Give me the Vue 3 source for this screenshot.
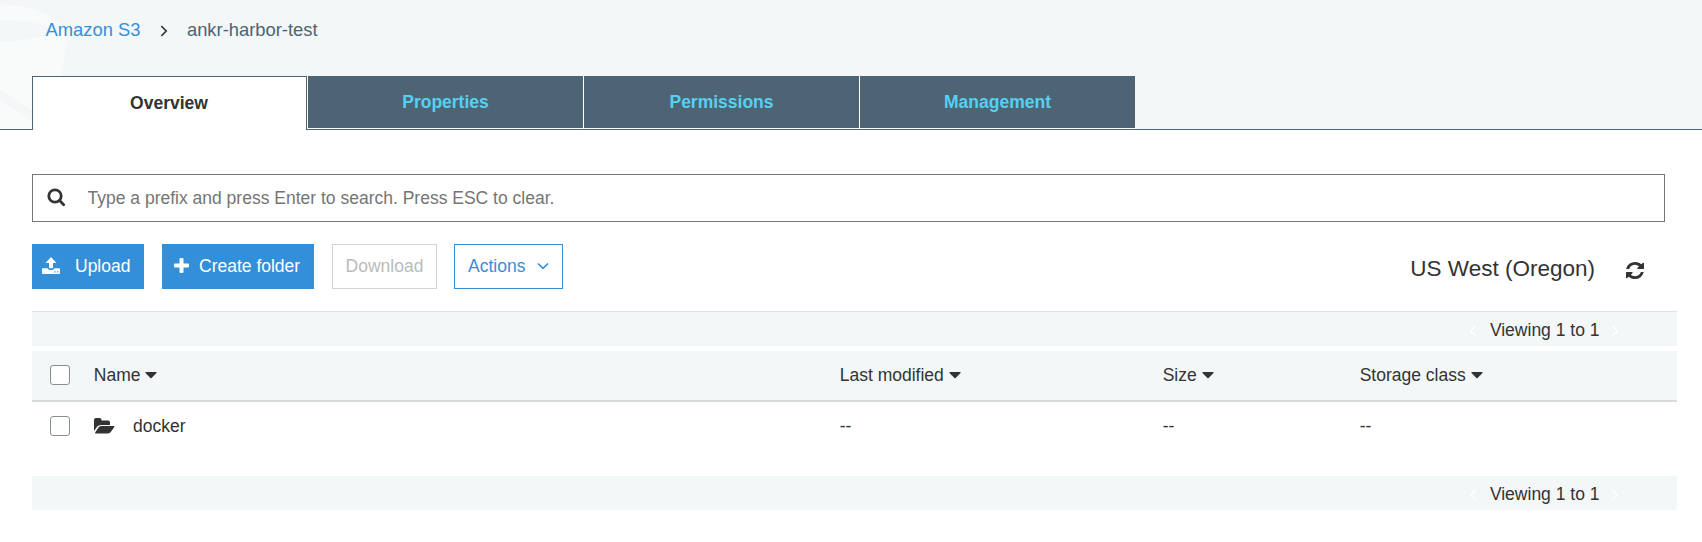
<script setup>
const tabs = ['Overview', 'Properties', 'Permissions', 'Management']
const columns = [
  { key: 'name', label: 'Name' },
  { key: 'modified', label: 'Last modified' },
  { key: 'size', label: 'Size' },
  { key: 'storage', label: 'Storage class' },
]
const rows = [{ name: 'docker', modified: '--', size: '--', storage: '--' }]
</script>

<template>
  <div class="page">
    <header class="header">
      <svg class="bucket" width="70" height="129" viewBox="0 0 70 129">
        <path class="bucket-body" d="M0 4.5C34 5 60 17 66 33Q67 37 66.500 42L54 129H0Z" />
        <path class="bucket-cut" d="M0 19.500C26 20 45 24 57 30.500C44 37 25 41 0 41.500Z" />
        <path class="bucket-cut" d="M0 90L40 115V126L0 99Z" />
      </svg>
      <nav class="crumbs">
        <a class="crumb-link">Amazon S3</a>
        <svg class="crumb-arrow" width="8" height="12" viewBox="0 0 8 12"><path d="M1.300 1L6.200 6L1.300 11" /></svg>
        <span>ankr-harbor-test</span>
      </nav>
      <div class="tabs">
        <div v-for="(tab, i) in tabs" :key="tab" class="tab" :class="{ active: i === 0 }">{{ tab }}</div>
      </div>
    </header>

    <main class="content">
      <div class="search">
        <svg width="19" height="19" viewBox="0 0 19 19"><circle cx="8" cy="8" r="6.200" /><path d="M12.600 12.600L16.700 16.700" /></svg>
        <input type="text" placeholder="Type a prefix and press Enter to search. Press ESC to clear." />
      </div>

      <div class="toolbar">
        <button class="btn primary upload">
          <svg width="18" height="17" viewBox="0 0 18 17">
            <path d="M9 0L14.500 6H11V10.500Q11 11.300 10.200 11.300H7.800Q7 11.300 7 10.500V6H3.500Z" />
            <path fill-rule="evenodd" d="M1 11.300H5.600Q6.300 13 8 13H10Q11.700 13 12.400 11.300H17Q18 11.300 18 12.300V16Q18 17 17 17H1Q0 17 0 16V12.300Q0 11.300 1 11.300ZM12.200 14.300V15.500H13.500V14.300ZM15 14.300V15.500H16.300V14.300Z" />
          </svg>
          <span>Upload</span>
        </button>
        <button class="btn primary create">
          <svg width="15" height="15" viewBox="0 0 15 15"><path d="M5.500 1Q5.500 0 6.500 0H8.500Q9.500 0 9.500 1V5.500H14Q15 5.500 15 6.500V8.500Q15 9.500 14 9.500H9.500V14Q9.500 15 8.500 15H6.500Q5.500 15 5.500 14V9.500H1Q0 9.500 0 8.500V6.500Q0 5.500 1 5.500H5.500Z" /></svg>
          <span>Create folder</span>
        </button>
        <button class="btn disabled" disabled>Download</button>
        <button class="btn outline">
          <span>Actions</span>
          <svg width="12" height="8" viewBox="0 0 12 8"><path d="M1 1.500L6 6.300L11 1.500" /></svg>
        </button>
        <div class="region">
          <span>US West (Oregon)</span>
          <svg width="18" height="17" viewBox="0 128 1536 1536" preserveAspectRatio="none"><path d="M1511 1056q0 5-1 7-64 268-268 434.500t-478 166.500q-146 0-282.500-55t-243.500-157l-129 129q-19 19-45 19t-45-19-19-45v-448q0-26 19-45t45-19h448q26 0 45 19t19 45-19 45l-137 137q71 66 161 102t187 36q134 0 250-65t186-179q11-17 53-117 8-23 30-23h192q13 0 22.500 9.500t9.500 22.500zm25-800v448q0 26-19 45t-45 19h-448q-26 0-45-19t-19-45 19-45l138-138q-148-137-349-137-134 0-250 65t-186 179q-11 17-53 117-8 23-30 23h-199q-13 0-22.500-9.500t-9.500-22.500v-7q65-268 270-434.500t480-166.500q146 0 284 55.500t245 156.500l130-129q19-19 45-19t45 19 19 45z" /></svg>
        </div>
      </div>

      <div class="pager top">
        <svg width="8" height="12" viewBox="0 0 8 12"><path d="M6.700 1L1.800 6L6.700 11" /></svg>
        <span>Viewing 1 to 1</span>
        <svg width="8" height="12" viewBox="0 0 8 12"><path d="M1.300 1L6.200 6L1.300 11" /></svg>
      </div>

      <div class="grid head">
        <span class="check"></span>
        <div v-for="col in columns" :key="col.key" class="cell">
          <span>{{ col.label }}</span>
          <svg class="caret" width="12" height="7" viewBox="0 0 12 7"><path d="M.8 0H11.200Q12 .3 11.500 1L6.600 6Q6 6.500 5.400 6L.5 1Q0 .3 .8 0Z" /></svg>
        </div>
      </div>
      <div v-for="row in rows" :key="row.name" class="grid row">
        <span class="check"></span>
        <div v-for="col in columns" :key="col.key" class="cell">
          <svg v-if="col.key === 'name'" class="folder" width="21" height="16" viewBox="0 0 21 16">
            <path d="M0 13V2Q0 0 2 0H5.500Q7.500 0 7.500 2V2.500H14Q16 2.500 16 4.500V7H7Q4.500 7 3 8.800Z" />
            <path d="M7 8H19.500Q21 8 20.200 9.300L16.700 14Q15.300 15.500 13.500 15.500H2Q.4 15.500 1.300 14.200L4.500 9.500Q5.500 8 7 8Z" />
          </svg>
          <span>{{ row[col.key] }}</span>
        </div>
      </div>

      <div class="pager bottom">
        <svg width="8" height="12" viewBox="0 0 8 12"><path d="M6.700 1L1.800 6L6.700 11" /></svg>
        <span>Viewing 1 to 1</span>
        <svg width="8" height="12" viewBox="0 0 8 12"><path d="M1.300 1L6.200 6L1.300 11" /></svg>
      </div>
    </main>
  </div>
</template>

<style>
body { margin: 0; background: #fff; }
</style>

<style scoped>
.page { height: 542px; overflow: hidden; background: #fff; color: #333; font: 17.5px "Liberation Sans", Arial, sans-serif; }
.page * { box-sizing: border-box; }
svg { display: block; flex: none; fill: currentColor; }
.header { position: relative; height: 130px; background: #f3f7f8; border-bottom: 1px solid #4d6475; }
.bucket { position: absolute; left: 0; top: 0; }
.bucket-body { fill: #f9fbfb; }
.bucket-cut { fill: #f3f7f8; }
.crumbs { position: relative; display: flex; align-items: center; height: 60px; padding-left: 45.500px; font-size: 18.375px; color: #4d6475; }
.crumb-link { color: #348fd9; }
.crumb-arrow { margin: 1px 19px 0 19.500px; fill: none; stroke: #333; stroke-width: 1.7; }
.tabs { position: relative; display: flex; margin: 16px 0 0 32px; gap: 1px; }
.tab { display: flex; align-items: center; justify-content: center; width: 275px; height: 52px; background: #4d6475; color: #56d0f2; font-weight: bold; box-shadow: 0 1px #fff, -1px 0 #fff; }
.tab.active { height: 54px; padding-right: 1px; background: #fff; color: #333; border: 1px solid #4d6475; border-bottom: 0; box-shadow: none; }
.content { padding: 44px 25px 0 32px; }
.search { display: flex; align-items: center; height: 48px; margin-right: 12px; border: 1px solid #767676; padding-left: 13.500px; }
.search svg { margin-bottom: 1px; fill: none; stroke: #333; stroke-width: 2.8; stroke-linecap: round; }
.search input { flex: 1; height: 44px; border: 0; outline: 0; padding: 0; margin-left: 22px; font: inherit; background: none; }
.search input::placeholder { color: #757575; }
.toolbar { display: flex; height: 89px; padding-top: 22px; }
.btn { display: flex; align-items: center; height: 45px; margin: 0; padding: 0 0 1px; border: 0; font: inherit; white-space: nowrap; }
.primary { background: #348fd9; color: #fff; }
.primary svg { margin-bottom: 2px; }
.upload { width: 112px; padding-left: 10px; margin-right: 18px; gap: 15px; }
.create { width: 152px; padding-left: 12px; margin-right: 18px; gap: 10px; }
.disabled { width: 105px; justify-content: center; margin-right: 17px; border: 1px solid #d0d4d4; background: #fff; color: #bbb; }
.outline { width: 109px; padding-left: 13px; gap: 12px; border: 1px solid #348fd9; background: #fff; color: #348fd9; }
.outline svg { fill: none; stroke: #348fd9; stroke-width: 1.7; }
.region { display: flex; align-items: center; height: 50px; margin: 0 33px 0 auto; gap: 31px; font-size: 22.5px; }
.region svg { margin-top: 2px; }
.pager { display: flex; align-items: center; justify-content: flex-end; height: 34px; padding: 2px 58px 0 0; background: #f3f7f8; }
.pager svg { margin-top: 2px; fill: none; stroke: #fff; stroke-width: 1.6; }
.pager span { margin: 0 11.500px 0 12.500px; }
.pager.top { height: 35px; border-top: 1px solid #dfe2e2; margin-bottom: 5px; }
.grid { display: grid; grid-template-columns: 43.800px 745.900px 323px 197px 1fr; align-items: center; padding-left: 18px; }
.head { height: 51px; padding-bottom: 1px; background: #f3f7f8; border-bottom: 2px solid #d8dbdc; }
.row { height: 48px; margin-bottom: 26px; }
.check { width: 20px; height: 20px; border: 1px solid #879091; border-radius: 3px; background: #fff; }
.cell { display: flex; align-items: center; }
.caret { margin-left: 5px; }
.folder { margin: 0 18px 0 .2px; }
</style>
